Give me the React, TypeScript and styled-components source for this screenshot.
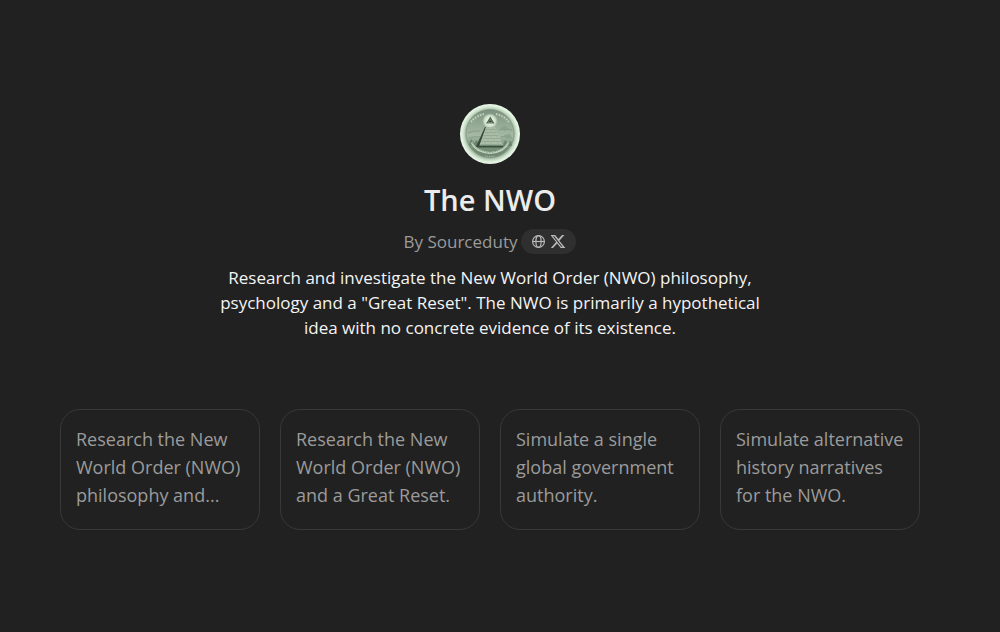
import React from "react";
import styled, { createGlobalStyle } from "styled-components";

const GlobalStyle = createGlobalStyle`
  *, *::before, *::after { box-sizing: border-box; }
  body {
    margin: 0;
    background: #212121;
    color: #ececec;
    font-family: "Segoe UI", "Open Sans", "Noto Sans", sans-serif;
  }
`;

const Page = styled.main`
  display: flex;
  flex-direction: column;
  align-items: center;
  padding: 104px 80px 80px 60px;
`;

const Avatar = styled.svg`
  display: block;
  width: 60px;
  height: 60px;
`;

const Title = styled.h1`
  margin: 16px 0 0;
  font-size: 29px;
  line-height: 40px;
  font-weight: 600;
  color: #ececec;
`;

const Byline = styled.div`
  display: flex;
  align-items: center;
  gap: 4px;
  margin-top: 9px;
  font-size: 17px;
  line-height: 25px;
  color: #9b9b9b;
`;

const Links = styled.nav`
  display: flex;
  align-items: center;
  gap: 5px;
  height: 25px;
  padding: 0 10px;
  border-radius: 13px;
  background: #2f2f2f;
`;

const IconLink = styled.a`
  display: block;
  color: #b8b8b8;

  svg {
    display: block;
    width: 15px;
    height: 15px;
  }
`;

const Description = styled.p`
  max-width: 560px;
  margin: 11px 0 0;
  font-size: 17px;
  line-height: 25px;
  text-align: center;
  color: #f4f4f4;
`;

const Prompts = styled.div`
  display: grid;
  grid-template-columns: repeat(4, minmax(0, 1fr));
  gap: 20px;
  width: 100%;
  margin-top: 69px;
`;

const PromptCard = styled.button`
  display: flex;
  align-items: flex-start;
  padding: 15px 15px 20px;
  border: 1px solid #383838;
  border-radius: 20px;
  background: transparent;
  font-family: inherit;
  font-size: 18px;
  line-height: 28px;
  text-align: left;
  color: #9b9b9b;
  cursor: pointer;
`;

const prompts = [
  "Research the New World Order (NWO) philosophy and...",
  "Research the New World Order (NWO) and a Great Reset.",
  "Simulate a single global government authority.",
  "Simulate alternative history narratives for the NWO.",
];

function SealAvatar() {
  return (
    <Avatar viewBox="0 0 60 60" role="img" aria-label="Great Seal pyramid">
      <defs>
        <radialGradient id="rim">
          <stop offset="0.78" stopColor="#8fa58e" />
          <stop offset="0.86" stopColor="#c3d6c2" />
          <stop offset="0.93" stopColor="#ddf0dc" />
          <stop offset="1" stopColor="#e8f8e7" />
        </radialGradient>
        <linearGradient id="field" x1="0" y1="0" x2="0" y2="1">
          <stop offset="0" stopColor="#7b917e" />
          <stop offset="0.3" stopColor="#94a994" />
          <stop offset="0.55" stopColor="#a5b9a4" />
          <stop offset="0.8" stopColor="#768d78" />
          <stop offset="1" stopColor="#6f866f" />
        </linearGradient>
        <radialGradient id="glow">
          <stop offset="0.35" stopColor="#e6f5e2" />
          <stop offset="0.7" stopColor="#d3e3cf" stopOpacity="0.9" />
          <stop offset="1" stopColor="#b2c5b0" stopOpacity="0" />
        </radialGradient>
      </defs>
      <circle cx="30" cy="30" r="30" fill="url(#rim)" />
      <circle cx="30" cy="29.5" r="24" fill="url(#field)" />
      <circle cx="30" cy="29.5" r="24" fill="none" stroke="#7d947c" strokeWidth="1" strokeOpacity="0.6" />
      <path d="M11 18a22 22 0 0 1 13-8M36 10a22 22 0 0 1 13 8" fill="none" stroke="#c0d2bd" strokeWidth="2" strokeDasharray="1.6 1.2" />
      <path d="M8 29q6-3 12-2M39 26q6-3 13 0M9 34q5-2 11-1M41 33q5-2 11 1" fill="none" stroke="#859c85" strokeWidth="1" />
      <path d="M40 24l5-2 4 3-4 2zM44 31l6-1 2 4-6 1z" fill="#8ca38b" />
      <path d="M9 41l2-6 3 4 3-3 2 6zM43 42l2-6 3 3 3-2 1 5z" fill="#6b836b" />
      <circle cx="30" cy="17" r="8" fill="url(#glow)" />
      <path d="M25 23L16 42.5L19.5 43L26.5 23Z" fill="#344b3a" />
      <path d="M26 23h9l8.5 19.5H19z" fill="#abbfa8" />
      <path d="M25.5 25.5h10M24.5 28.5h12.5M23.5 31.5h15M22.5 34.5h17.5M21.5 37.5h19.5M20.5 40.5h21" stroke="#91a68f" strokeWidth="0.8" />
      <path d="M28 23v2.5M33 23v2.5M26 25.5v3M31 25.5v3M35 25.5v3M28 28.5v3M34 28.5v3M25 31.5v3M31 31.5v3M37 31.5v3M28 34.5v3M34 34.5v3M25 37.5v3M31 37.5v3M38 37.5v3" stroke="#98ad96" strokeWidth="0.6" />
      <path d="M16 41.5h27l1 2h-28z" fill="#394f3d" />
      <path d="M30.3 12.5L34.5 19.5H26z" fill="#526850" />
      <path d="M30.3 15.3L32.5 18.8h-4.4z" fill="#93a98e" />
      <ellipse cx="30.3" cy="17.3" rx="1.3" ry="0.9" fill="#263b2e" />
      <path d="M11.5 38.5q4 9 18.5 10.5Q44 48 48.5 38.5" fill="none" stroke="#c0d3bd" strokeWidth="2" />
      <path d="M12 39q5 8 18 9.5 13-1.5 18-9.5" fill="none" stroke="#859b83" strokeWidth="1" strokeDasharray="1.4 1.1" />
      <path d="M25 52q5 1 10 0" fill="none" stroke="#adc1aa" strokeWidth="1" strokeDasharray="1.2 0.7" />
    </Avatar>
  );
}

function GlobeIcon() {
  return (
    <svg viewBox="0 0 15 15" fill="none" stroke="currentColor" strokeWidth="1.2" aria-hidden="true">
      <circle cx="7.5" cy="7.5" r="5.9" />
      <ellipse cx="7.5" cy="7.5" rx="2.6" ry="5.9" />
      <path d="M1.5 7.5h12" />
    </svg>
  );
}

function XIcon() {
  return (
    <svg viewBox="0 0 24 24" fill="currentColor" aria-hidden="true">
      <path d="M17.7 1.5h3.7l-8 9.2L23 22.5h-7.4l-5.8-7.2-6.6 7.2H-.5l8.6-9.8L-1 1.5h7.6l5.2 6.6zM16.4 20.3h2L5.2 3.6H3z" />
    </svg>
  );
}

export default function App() {
  return (
    <>
      <GlobalStyle />
      <Page>
        <SealAvatar />
        <Title>The NWO</Title>
        <Byline>
          <span>By Sourceduty</span>
          <Links aria-label="Creator links">
            <IconLink href="#website" aria-label="Website">
              <GlobeIcon />
            </IconLink>
            <IconLink href="#x" aria-label="X">
              <XIcon />
            </IconLink>
          </Links>
        </Byline>
        <Description>
          Research and investigate the New World Order (NWO) philosophy, psychology and a "Great
          Reset". The NWO is primarily a hypothetical idea with no concrete evidence of its
          existence.
        </Description>
        <Prompts>
          {prompts.map((prompt) => (
            <PromptCard key={prompt} type="button">
              {prompt}
            </PromptCard>
          ))}
        </Prompts>
      </Page>
    </>
  );
}
